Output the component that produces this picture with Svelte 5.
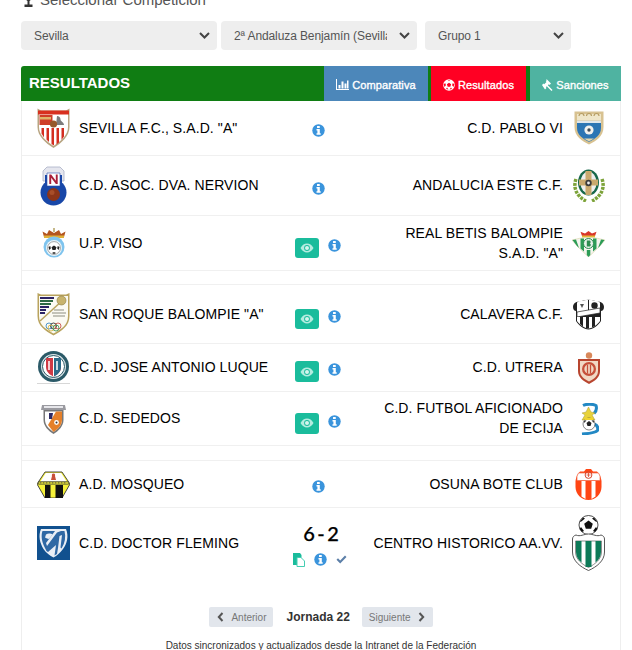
<script>
  const rows = [
    { h: 'h55', home: 'SEVILLA F.C., S.A.D. "A"', hc: 'sevilla', away: 'C.D. PABLO VI', ac: 'pablo', mid: 'info' },
    { h: 'h60', home: 'C.D. ASOC. DVA. NERVION', hc: 'nervion', away: 'ANDALUCIA ESTE C.F.', ac: 'andalucia', mid: 'info' },
    { h: 'h55', home: 'U.P. VISO', hc: 'viso', away: 'REAL BETIS BALOMPIE S.A.D. "A"', ac: 'betis', mid: 'eye' },
    { spacer: 'h14' },
    { h: 'h59', home: 'SAN ROQUE BALOMPIE "A"', hc: 'roque', away: 'CALAVERA C.F.', ac: 'calavera', mid: 'eye' },
    { h: 'h48', home: 'C.D. JOSE ANTONIO LUQUE', hc: 'luque', away: 'C.D. UTRERA', ac: 'utrera', mid: 'eye' },
    { h: 'h54', home: 'C.D. SEDEDOS', hc: 'sededos', away: 'C.D. FUTBOL AFICIONADO DE ECIJA', ac: 'ecija', mid: 'eye' },
    { spacer: 'h15' },
    { h: 'h47', home: 'A.D. MOSQUEO', hc: 'mosqueo', away: 'OSUNA BOTE CLUB', ac: 'osuna', mid: 'info' },
    { h: 'h70', home: 'C.D. DOCTOR FLEMING', hc: 'fleming', away: 'CENTRO HISTORICO AA.VV.', ac: 'centro', mid: 'score', last: true }
  ];
</script>

{#snippet info()}
  <svg class="info" width="13" height="13" viewBox="0 0 13 13" aria-hidden="true">
    <circle cx="6.5" cy="6.5" r="6.2" fill="#3a94dc" />
    <rect x="5" y="1.9" width="2.8" height="2.2" rx=".4" fill="#fff" />
    <path d="M4.5 5h3.3v4.2h.9v1.6H4.5V9.2h.9V6.6h-.9z" fill="#fff" />
  </svg>
{/snippet}

{#snippet eye()}
  <span class="eyebtn">
    <svg width="14" height="10" viewBox="0 0 14 10" aria-hidden="true">
      <path d="M.5 5C2.2 2 4.4.6 7 .6S11.8 2 13.500 5C11.800 8 9.600 9.400 7 9.400S2.200 8 .5 5z" fill="#b5ece0" />
      <circle cx="7" cy="5" r="2.900" fill="#1abc9c" />
      <circle cx="7" cy="5" r="2" fill="#d6f5ee" />
    </svg>
  </span>
{/snippet}

{#snippet crest(id)}
  {#if id === 'sevilla'}
    <svg width="33" height="40" viewBox="0 0 33 40" aria-hidden="true">
      <path d="M.5.500 4 2.500h25L32.500.500V19c0 9-8 16-16 21-8-5-16-12-16-21z" fill="#b8a582" />
      <path d="M2 4h29v15c0 8-7 14-14.500 19C9 33 2 27 2 19z" fill="#fff" />
      <path d="M1 2.500h31v4H1z" fill="#d8301f" />
      <path d="M2.500 7h13v10h-13z" fill="#cf3d27" />
      <path d="M3 9h11v2.500H3z" fill="#e0b46a" />
      <path d="M20 8c2 0 3.500 1.500 3.500 3.500S27 14 27 17h-8z" fill="#444" opacity=".7" />
      <path d="M4.500 20H7v9.500l-2.500-4zM9.500 20H12v14l-2.500-2.500zM14.500 20H17v17.500l-2.500-1.500zM19.500 20H22v14.500l-2.500 2zM24.500 20H27v8.500l-2.500 3.500z" fill="#d42e20" />
      <circle cx="16.500" cy="16" r="3.600" fill="#96592b" />
    </svg>
  {:else if id === 'pablo'}
    <svg width="30" height="34" viewBox="0 0 30 34" aria-hidden="true">
      <path d="M.5.500h29V16c0 9-7 14-14.500 17.500C7.500 30 .5 25 .5 16z" fill="#d8c291" />
      <path d="M3 3h24v6H3z" fill="#efe6c9" />
      <path d="M5 5a2.500 2.500 0 0 1 5 0M12.500 5a2.500 2.500 0 0 1 5 0M20 5a2.500 2.500 0 0 1 5 0" fill="none" stroke="#b69d63" stroke-width="1.200" />
      <path d="M3 10h24v7c0 7-6 11-12 14C9 28 3 24 3 17z" fill="#2b75b4" />
      <path d="M3 9.500h24v2.500H3z" fill="#dfe6ea" />
      <circle cx="15" cy="19" r="4.600" fill="#f1f1ee" />
      <circle cx="15" cy="19" r="1.700" fill="#3c4a55" />
      <path d="M10 27.500h10l-5 3z" fill="#e2d6ae" />
    </svg>
  {:else if id === 'nervion'}
    <svg width="27" height="40" viewBox="0 0 27 40" aria-hidden="true">
      <path d="M3 5 7 1h13l4 4v10H3z" fill="#e5e6ee" stroke="#aab0c6" stroke-width=".8" />
      <path d="M5 9h17v8H5z" fill="#1847a8" />
      <circle cx="13.500" cy="26.500" r="13" fill="#1847a8" />
      <path d="M7 7h13v13H7z" fill="#fff" stroke="#2b4fa8" stroke-width=".6" />
      <path d="M9.300 18v-9.500h1.900l4.600 6.200V8.500h1.900V18h-1.800l-4.700-6.300V18z" fill="#a91f3a" />
      <circle cx="13.500" cy="28.500" r="6.500" fill="#8c3518" />
      <circle cx="12" cy="26.500" r="2.500" fill="#b45a30" opacity=".7" />
    </svg>
  {:else if id === 'andalucia'}
    <svg width="32" height="33" viewBox="0 0 32 33" aria-hidden="true">
      <path d="M3 10C0 18 3 27 13 32M29 10c3 8 0 17-10 22" fill="none" stroke="#7da33a" stroke-width="3.500" stroke-dasharray="3 1" />
      <ellipse cx="15.500" cy="13.500" rx="10.500" ry="13" fill="#17684a" />
      <ellipse cx="15.500" cy="13.500" rx="8" ry="11" fill="#eee" />
      <path d="M12.500 2h6v8.500H25v6h-6.500V26h-6v-9.500H6v-6h6.500z" fill="#c9a96e" />
      <circle cx="15.500" cy="14" r="3.200" fill="#3a3a3a" />
      <circle cx="15.500" cy="14" r="1.400" fill="#eee" />
    </svg>
  {:else if id === 'viso'}
    <svg width="26" height="30" viewBox="0 0 26 30" aria-hidden="true">
      <path d="M3 9 1.500 3.500 6 6l2-4 5 3 5-3 2 4 4.500-2.500L23 9z" fill="#b3541e" />
      <path d="M13 0v4" stroke="#a08a3c" stroke-width="1.200" />
      <path d="M3 7.500h20V10H3z" fill="#e0b03a" />
      <circle cx="13" cy="19" r="10.500" fill="#7fc4ee" />
      <circle cx="13" cy="20" r="8" fill="#e9f3f8" />
      <circle cx="13" cy="20" r="6.400" fill="#fff" stroke="#555" stroke-width=".5" />
      <path d="m13 17.500 2.500 1.800-1 2.800h-3l-1-2.800zM7.500 19l1.800-1 .5 2.500-1.500 1.500zM18.500 19l-1.800-1-.5 2.500 1.500 1.500zM11 25l2-1 2 1-2 1z" fill="#222" />
    </svg>
  {:else if id === 'betis'}
    <svg width="33" height="27" viewBox="0 0 33 27" aria-hidden="true">
      <path d="M10 6 8.500 1.800 13 3.500 16.500 1 20 3.500l4.500-1.700L23 6z" fill="#d8362a" />
      <path d="M10 5.500h13v2H10z" fill="#e5b93a" />
      <path d="M0 10c5-1 9-2.500 16.500-2.500S28 9 33 10l-5 6-11.500 11L5 16z" fill="#f4f4ee" stroke="#c9bd7a" stroke-width=".4" />
      <path d="m.5 10 3.500-.5L7 18l-2-2zM32.500 10 29 9.500 26 18l2-2zM8.500 8.500h3.500v13l-3.500-3zM21 8.500h3.500v10L21 21.500zM14.800 20h3.500v5l-1.800 2-1.700-2z" fill="#2c9c56" />
      <circle cx="16.500" cy="13.500" r="5" fill="#e6f2e9" stroke="#2c8c50" stroke-width="1" />
      <path d="M14.800 10.500h2.500c1.700 0 1.700 2.700.4 3 1.500.3 1.500 3-.4 3h-2.500z" fill="#2c8c50" />
    </svg>
  {:else if id === 'roque'}
    <svg width="33" height="44" viewBox="0 0 33 44" aria-hidden="true">
      <path d="M.5 1 4 2.500h25L32.500 1v23c0 10-8 15-16 19.500C8.500 39 .5 34 .5 24z" fill="#b9a35e" />
      <path d="M2 4h29v20c0 9-7 13.500-14.500 17.500C9 37.500 2 33 2 24z" fill="#fbfaf3" />
      <path d="M3 5h14v2H3z" fill="#2d2464" />
      <path d="M3 8h13v2H3z" fill="#2e6a44" />
      <path d="M3 11h11v2H3z" fill="#2e6a44" />
      <path d="M3 14h9v2H3z" fill="#2d2464" />
      <path d="M3 17h6v2H3zM3 20h5v2H3z" fill="#2d2464" />
      <path d="M26 8 3 29" stroke="#b9a35e" stroke-width="1.500" />
      <circle cx="24.500" cy="8.500" r="4.500" fill="#c8b36c" stroke="#8a7a3e" stroke-width=".6" />
      <path d="M17 18h10M15 21h14M16 24h12" stroke="#8d8d80" stroke-width="1" />
      <circle cx="12" cy="34" r="3" fill="none" stroke="#3a8ac8" stroke-width=".9" />
      <circle cx="16.500" cy="34" r="3" fill="none" stroke="#333" stroke-width=".9" />
      <circle cx="21" cy="34" r="3" fill="none" stroke="#c8524a" stroke-width=".9" />
      <circle cx="14" cy="36" r="3" fill="none" stroke="#d8b84a" stroke-width=".9" />
      <circle cx="19" cy="36" r="3" fill="none" stroke="#4a9a5a" stroke-width=".9" />
    </svg>
  {:else if id === 'calavera'}
    <svg width="33" height="32" viewBox="0 0 33 32" aria-hidden="true">
      <path d="M1 9C1 4 6 3 8 4 12 1 21 1 25 4c2-1 7 0 7 5 0 3-2 4-3 4v10c-3 5-8 8-12.500 8.500C12 31 7 28 4 23V13c-1 0-3-1-3-4z" fill="#222" />
      <path d="M5 4.500C9 2.500 14 2 16 2v12H5zM17 2c3 0 7 .5 11 2.500V14H17z" fill="#fff" />
      <path d="M5 14 28 10v5L5 19z" fill="#fff" stroke="#222" stroke-width=".7" />
      <path d="M5 19h23v4c-3 4-7 7-11.500 7.500C12 30 8 27 5 23z" fill="#fff" />
      <path d="M8 19h3v9.500l-3-2.500zM14 18h3v12.500h-3zM20 17h3v11l-3 1.500z" fill="#222" />
      <circle cx="22.500" cy="7.500" r="3.200" fill="#222" />
      <path d="M8 6h4l-2 4z" fill="#555" />
    </svg>
  {:else if id === 'luque'}
    <svg width="33" height="33" viewBox="0 0 33 33" aria-hidden="true">
      <circle cx="16.500" cy="15.500" r="15.500" fill="#2b5a68" />
      <circle cx="16.500" cy="15.500" r="12.500" fill="#dfe7ea" />
      <circle cx="16.500" cy="15.500" r="11" fill="#fff" stroke="#2b5a68" stroke-width="1" />
      <path d="M9 7h15v9c0 5-4 8-7.500 9.500C13 24 9 21 9 16z" fill="#cf3a45" />
      <path d="M16 7h1v18h-1z" fill="#fff" />
      <path d="M17 7h7v9c0 5-4 8-7 9.500z" fill="#2b6a88" />
      <path d="M12 10v9M20 10v9" stroke="#fff" stroke-width="1.500" />
      <path d="M0 32.500h33" stroke="#d7d7d7" />
    </svg>
  {:else if id === 'utrera'}
    <svg width="22" height="32" viewBox="0 0 22 32" aria-hidden="true">
      <circle cx="11" cy="3.500" r="3.200" fill="#d8885a" />
      <path d="M0 7h22v12c0 6-5 10-11 13C5 29 0 25 0 19z" fill="#b8452f" />
      <path d="M2 9h18v10c0 5-4 8-9 10.500C6 27 2 24 2 19z" fill="#f1d8c4" />
      <circle cx="11" cy="17" r="7" fill="#c6503a" />
      <circle cx="11" cy="17" r="4.700" fill="#f1d8c4" />
      <path d="M9.500 12.500v9M12.500 12.500v9" stroke="#c6503a" stroke-width="1.300" />
    </svg>
  {:else if id === 'sededos'}
    <svg width="25" height="30" viewBox="0 0 25 30" aria-hidden="true">
      <path d="M1 1h23l1 5H0z" fill="#9a9aa0" />
      <path d="M3 2h19v2H3z" fill="#e6e6ea" />
      <path d="M2.500 6h20v10c0 6-5 11-10 14C7.500 27 2.500 22 2.500 16z" fill="#777" />
      <path d="M4 7.500h17V16c0 5-4 9-8.500 12C8 25 4 21 4 16z" fill="#fff" />
      <path d="M21 7.500V16c0 5-4 9-8.500 12L7 21 15 7.500z" fill="#e5802a" />
      <path d="M8 9h4l-1 6H8z" fill="#2d2a66" />
      <circle cx="15.500" cy="18.500" r="2.400" fill="#fff" />
      <circle cx="15.500" cy="18.500" r="1" fill="#333" />
    </svg>
  {:else if id === 'ecija'}
    <svg width="20" height="32" viewBox="0 0 20 32" aria-hidden="true">
      <path d="M4 2.500C8 .5 14 1 17 2.500c1 3 0 6-2 8" fill="none" stroke="#2288c4" stroke-width="3" />
      <path d="M15 21c3 1 4.500 3 3.500 6.500-3 3-10 3-15.500 3.500" fill="none" stroke="#2288c4" stroke-width="3" />
      <path d="M9.500 4 12 9l4 1-3 2 3 5H3l3-5-3-2 4-1z" fill="#e8d23a" stroke="#a89a3a" stroke-width=".5" />
      <circle cx="10" cy="21" r="6" fill="#fff" stroke="#333" stroke-width=".6" />
      <path d="m10 18 2.500 2-1 3h-3l-1-3zM5 18l2.500-1-2 3zM15 18l-2.500-1 2 3z" fill="#222" />
      <path d="M6 15h8v2H6z" fill="#f0d42e" />
    </svg>
  {:else if id === 'mosqueo'}
    <svg width="33" height="27" viewBox="0 0 33 27" aria-hidden="true">
      <path d="M8 1h17l8 12-8 14H8L0 13z" fill="#f6f23a" stroke="#333" stroke-width=".9" />
      <path d="M8.800 2h15.400l6 9.500H2.800z" fill="#fff" />
      <path d="M16.500 2.500c1.800 0 1.800 2 1.500 2.500l1 4h-5l1-4c-.3-.5-.2-2.500 1.500-2.500z" fill="#c9503a" />
      <path d="M1.500 10.500h30v2.800h-30z" fill="#f6f23a" stroke="#333" stroke-width=".6" />
      <path d="M2.600 11.900h27.800" stroke="#333" stroke-width="1" stroke-dasharray="2 1" />
      <path d="M8 14h5.500v13H8zM18.500 14H26v13h-7.500z" fill="#111" />
    </svg>
  {:else if id === 'osuna'}
    <svg width="27" height="32" viewBox="0 0 27 32" aria-hidden="true">
      <path d="M.5 13C1 10 1.500 8 3 6l2-2.500h4L11 1h5l2 2.500h4L24 6c1.500 2 2 4 2.500 7v6c0 7-6 13-13 13S.5 26 .5 19z" fill="#ff4514" />
      <path d="M6.500 13h4v18l-4-2.500zM16.500 13h4v15.500l-4 2.500z" fill="#fff" />
      <path d="M3.500 5h20l1.500 3v4.500H2V8z" fill="#fff" stroke="#f26a4a" stroke-width=".7" />
      <circle cx="13.500" cy="7" r="3.400" fill="none" stroke="#d8452a" stroke-width="1" />
      <path d="M11.500 7h4M13.500 5v4" stroke="#d8452a" stroke-width=".8" />
    </svg>
  {:else if id === 'fleming'}
    <svg width="33" height="34" viewBox="0 0 33 34" aria-hidden="true">
      <rect width="33" height="34" fill="#11518f" />
      <path d="M4 3h25c3 7 1 15-3 20-3 4-6 6.500-9.500 8.500C13 29.500 9 27 6.500 23 3 17 1 10 4 3z" fill="#e9eef5" />
      <path d="M5.500 5H18l-9 12 1 3 10-13.500L24 5h3.500c1.500 6 .5 12-3 17.500l-1-1L25 9l-2.500 1-1.500 12-1 6-2.500 1.500L19 19l-8 7-1.500-1L7 20C4.500 15 4 9 5.500 5z" fill="#2f68a4" />
      <path d="M9 8.500c2-1.500 5-1 6.500 0L12 13l-2-.500-2-1z" fill="#e9eef5" />
    </svg>
  {:else if id === 'centro'}
    <svg width="33" height="56" viewBox="0 0 33 56" aria-hidden="true">
      <circle cx="16.500" cy="10" r="9.500" fill="#fff" stroke="#222" stroke-width=".8" />
      <path d="m16.500 5.500 4.300 3.200-1.600 5h-5.400l-1.600-5zM8 6.500l3-4 2 1-4.300 3.500zM25 6.500l-3-4-2 1 4.300 3.500zM10 17l-2.500-3 1.500-2 3 4zM23 17l2.500-3-1.500-2-3 4z" fill="#111" />
      <path d="M4 20c4 2 8-1 12.500-1s8.500 3 12.500 1c2 .5 3.500 2 3.500 4v13c0 9-8 15-16 18.500C8.500 52 .5 46 .5 37V24c0-2 1.500-3.500 3.500-4z" fill="#fff" stroke="#444" stroke-width=".9" />
      <path d="M3.500 26h26v11c0 7-6 12-13 15.500C9.500 49 3.500 44 3.500 37z" fill="#fff" stroke="#444" stroke-width=".6" />
      <path d="M4 26h5.500v21.500C6 45 4 41 4 37zM13.500 26h6v26h-6zM23.500 26H29v11c0 4-2 8-5.500 10.500z" fill="#0d7a58" />
    </svg>
  {/if}
{/snippet}

<div class="page">
  <div class="heading">
    <svg width="11" height="14" viewBox="0 0 11 14" aria-hidden="true">
      <path d="M2 0h7v4c0 2-1.500 3.500-2.500 4v3.500H9.500V14h-8v-2.500h3V8C3.500 7.500 2 6 2 4z" fill="#333" />
    </svg>
    <span>Seleccionar Competición</span>
  </div>

  <div class="selects">
    <div class="sel w196">
      <select aria-label="Provincia"><option>Sevilla</option></select>
      <svg class="chev" width="11" height="7" viewBox="0 0 11 7" aria-hidden="true"><path d="m1 1 4.500 4.500L10 1" fill="none" stroke="#444" stroke-width="2" /></svg>
    </div>
    <div class="sel w196">
      <select aria-label="Competición"><option>2ª Andaluza Benjamín (Sevilla)</option></select>
      <svg class="chev" width="11" height="7" viewBox="0 0 11 7" aria-hidden="true"><path d="m1 1 4.500 4.500L10 1" fill="none" stroke="#444" stroke-width="2" /></svg>
    </div>
    <div class="sel w146">
      <select aria-label="Grupo"><option>Grupo 1</option></select>
      <svg class="chev" width="11" height="7" viewBox="0 0 11 7" aria-hidden="true"><path d="m1 1 4.500 4.500L10 1" fill="none" stroke="#444" stroke-width="2" /></svg>
    </div>
  </div>

  <header class="bar">
    <h2>RESULTADOS</h2>
    <div class="tab blue">
      <svg width="13" height="11" viewBox="0 0 13 11" aria-hidden="true"><path d="M0 0h1v10h12v1H0zM2.500 6h2v3.500h-2zM5.500 2.500h2v7h-2zM8.500 4.500h2v5h-2zM11 1.500h1.500v8H11z" fill="#fff" /></svg>
      <span>Comparativa</span>
    </div>
    <div class="tab red">
      <svg width="12" height="12" viewBox="0 0 12 12" aria-hidden="true"><circle cx="6" cy="6" r="5.800" fill="#fff" /><path d="m6 3.800 2.100 1.500-.8 2.500H4.700l-.8-2.500zM4.200 .6 6 1.400 7.800.6 6 2.200zM.6 5l1.800-.8.500 2L1.500 8zM11.400 5l-1.800-.8-.500 2L10.500 8zM3 10l1-1.500 1.500 2zM9 10 8 8.500l-1.500 2z" fill="#ff0023" /></svg>
      <span>Resultados</span>
    </div>
    <div class="tab teal">
      <svg width="11" height="12" viewBox="0 0 11 12" aria-hidden="true"><path d="M4.500 0 9 4.500 7.500 6 6.800 5.300 5.800 6.300 10.500 11l-1 1L4.800 7.300 3.800 8.300 4.500 9 3 10.500-.0 6 1.500 4.500 2.200 5.200 4.500 3 3.800 2.300 4.500 1.500z" fill="#fff" /></svg>
      <span>Sanciones</span>
    </div>
  </header>

  <section class="card">
    {#each rows as r}
      {#if r.spacer}
        <div class="spacer {r.spacer}"></div>
      {:else}
        <div class="row {r.h}" class:last={r.last}>
          <div class="team">
            <div class="logo">{@render crest(r.hc)}</div>
            <div class="name">{r.home}</div>
          </div>
          <div class="mid" class:scoremid={r.mid === 'score'}>
            {#if r.mid === 'info'}
              {@render info()}
            {:else if r.mid === 'eye'}
              {@render eye()}
              {@render info()}
            {:else}
              <div class="score">6 - 2</div>
              <div class="icons">
                <svg width="12" height="14" viewBox="0 0 12 14" aria-hidden="true">
                  <path d="M0 0h7l1.500 2v10H0z" fill="#1abc9c" />
                  <path d="M4 4.500h4L11.500 8v5.500H4z" fill="#fff" stroke="#45cdb2" stroke-width="1" />
                </svg>
                {@render info()}
                <svg width="11" height="9" viewBox="0 0 11 9" aria-hidden="true"><path d="m.5 4.800 3.700 3.700L10.500 2 9 .5 4.200 5.400 2 3.300z" fill="#5c7fa8" /></svg>
              </div>
            {/if}
          </div>
          <div class="team away">
            <div class="name">{r.away}</div>
            <div class="logo">{@render crest(r.ac)}</div>
          </div>
        </div>
      {/if}
    {/each}

    <nav class="pager">
      <span class="pg prev">
        <svg width="7" height="10" viewBox="0 0 7 10" aria-hidden="true"><path d="M5.500 1 1.800 5l3.700 4" fill="none" stroke="#555" stroke-width="2" /></svg>
        Anterior
      </span>
      <strong>Jornada 22</strong>
      <span class="pg next">
        Siguiente
        <svg width="7" height="10" viewBox="0 0 7 10" aria-hidden="true"><path d="m1.500 1 3.700 4-3.700 4" fill="none" stroke="#555" stroke-width="2" /></svg>
      </span>
    </nav>
    <p class="foot">Datos sincronizados y actualizados desde la Intranet de la Federación</p>
  </section>
</div>

<style>
  :global(body) {
    margin: 0;
    overflow: hidden;
    background: #fff;
  }
  .page {
    box-sizing: border-box;
    width: 632px;
    height: 650px;
    padding-left: 21px;
    overflow: hidden;
    font-family: "Liberation Sans", Arial, sans-serif;
    color: #111;
  }
  .heading {
    display: flex;
    align-items: center;
    gap: 6px;
    height: 20px;
    margin: -10px 0 11px 2px;
    font-size: 15px;
    line-height: 20px;
    color: #555;
  }
  .selects {
    display: flex;
    gap: 4px;
  }
  .sel {
    position: relative;
    height: 29px;
  }
  .sel:last-child {
    margin-left: 4px;
  }
  .w196 { width: 196px; }
  .w146 { width: 146px; }
  select {
    appearance: none;
    box-sizing: border-box;
    display: block;
    width: 100%;
    height: 100%;
    border: 0;
    border-radius: 4px;
    background: #eee;
    padding: 0 30px 0 13px;
    font: 12px "Liberation Sans", Arial, sans-serif;
    letter-spacing: -.1px;
    color: #555;
  }
  .chev {
    position: absolute;
    right: 7px;
    top: 11px;
    pointer-events: none;
  }
  .bar {
    display: flex;
    width: 600px;
    height: 35px;
    margin-top: 16px;
    background: #107d13;
    border-radius: 3px 0 0 0;
  }
  h2 {
    flex: 1;
    margin: 0;
    padding-left: 8px;
    font-size: 15px;
    line-height: 33px;
    color: #fff;
  }
  .tab {
    display: flex;
    align-items: center;
    justify-content: center;
    gap: 3px;
    padding-top: 2px;
    box-sizing: border-box;
    font-size: 11px;
    font-weight: 400;
    letter-spacing: .1px;
    -webkit-text-stroke: .35px #fff;
    color: #fff;
  }
  .blue { width: 104px; background: #4c87ba; margin-right: 3px; }
  .red { width: 95px; background: #ff0023; margin-right: 4px; }
  .teal { width: 91px; background: #4fb3a1; }
  .card {
    box-sizing: border-box;
    width: 600px;
    border-left: 1px solid #eee;
    border-right: 1px solid #eee;
    padding-bottom: 20px;
  }
  .row {
    box-sizing: border-box;
    display: grid;
    grid-template-columns: 250px 98px 250px;
    align-items: center;
    border-bottom: 1px solid #f0f0f0;
  }
  .row.last { border-bottom: 0; }
  .spacer {
    box-sizing: border-box;
    border-bottom: 1px solid #f0f0f0;
  }
  .h14 { height: 14px; }
  .h15 { height: 15px; }
  .h47 { height: 47px; }
  .h48 { height: 48px; }
  .h54 { height: 54px; }
  .h55 { height: 55px; }
  .h59 { height: 59px; }
  .h60 { height: 60px; }
  .h70 { height: 70px; }
  .team {
    display: flex;
    align-items: center;
    gap: 9px;
    padding-left: 15px;
  }
  .team.away {
    justify-content: flex-end;
    padding: 0 15px 0 0;
    text-align: right;
  }
  .logo {
    flex: none;
    display: flex;
    justify-content: center;
    align-items: center;
    width: 33px;
  }
  .logo svg { display: block; }
  .name {
    font-size: 14px;
    line-height: 20px;
    letter-spacing: .09px;
    color: #000;
  }
  .h60 .name, .h48 .name, .h54 .name {
    margin-top: -1px;
  }
  .mid {
    display: flex;
    align-items: center;
    justify-content: center;
    gap: 9px;
    padding: 5px 6px 0 0;
    box-sizing: border-box;
  }
  .h48 .mid {
    padding-top: 4px;
  }
  .mid.scoremid {
    flex-direction: column;
    gap: 7px;
    padding: 0;
  }
  .info { display: block; flex: none; }
  .eyebtn {
    display: flex;
    align-items: center;
    justify-content: center;
    width: 24px;
    height: 20px;
    margin-top: 4px;
    border-radius: 3px;
    background: #1abc9c;
  }
  .h48 .eyebtn, .h54 .eyebtn {
    height: 21px;
  }
  .score {
    font-family: "Lato", "Liberation Sans", sans-serif;
    font-size: 20px;
    font-weight: 500;
    line-height: 26px;
    word-spacing: -2.500px;
    -webkit-text-stroke: .25px #000;
    color: #000;
  }
  .icons {
    display: flex;
    align-items: center;
    gap: 9px;
    padding-right: 2px;
  }
  .pager {
    display: flex;
    justify-content: center;
    align-items: center;
    gap: 13px;
    margin-top: 29px;
    font-size: 10px;
  }
  .pg {
    display: flex;
    align-items: center;
    height: 20px;
    border-radius: 2px;
    background: #e2e6ec;
    color: #777;
  }
  .prev { gap: 7px; padding: 0 7px 0 8px; }
  .next { gap: 7px; padding: 0 8px 0 7px; }
  .pager strong {
    margin-right: -1px;
    font-size: 12px;
    color: #333;
  }
  .foot {
    margin: 13px 0 0;
    text-align: center;
    font-size: 10px;
    color: #333;
  }
</style>
